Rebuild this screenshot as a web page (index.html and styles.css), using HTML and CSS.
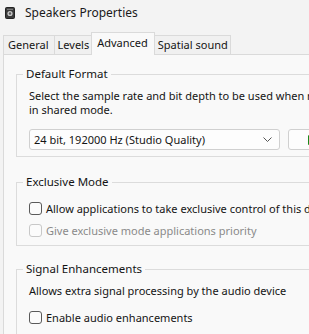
FILE: index.html
```html
<!DOCTYPE html>
<html>
<head>
    <title>Speakers Properties</title>
    <link rel="stylesheet" href="styles.css">
</head>
<body>
    <div class="titlebar">
        <svg class="app-icon" width="10" height="12" viewBox="0 0 10 12">
            <rect x="0.5" y="0.5" width="9" height="11" rx="1" fill="#3a3a3a" stroke="#222"/>
            <circle cx="5" cy="6.5" r="2.6" fill="#c9c9c9"/>
            <circle cx="5" cy="6.5" r="1.2" fill="#5a5a5a"/>
            <rect x="2" y="1.8" width="6" height="1" fill="#8a8a8a"/>
        </svg>
        <span class="title">Speakers Properties</span>
    </div>

    <div class="tabs">
        <div class="tab wide">General</div>
        <div class="tab">Levels</div>
        <div class="tab active">Advanced</div>
        <div class="tab">Spatial sound</div>
    </div>

    <div class="panel">
        <fieldset class="group format">
            <legend>Default Format</legend>
            <p class="desc">Select the sample rate and bit depth to be used when running<br>in shared mode.</p>
            <div class="format-row">
                <div class="select">
                    <span>24 bit, 192000 Hz (Studio Quality)</span>
                    <svg width="9" height="5" viewBox="0 0 9 5"><path d="M0.5 0.5 L4.5 4.5 L8.5 0.5" fill="none" stroke="#555" stroke-width="1"/></svg>
                </div>
                <div class="btn"><span class="play"></span>Test</div>
            </div>
        </fieldset>

        <fieldset class="group exclusive">
            <legend>Exclusive Mode</legend>
            <label class="check"><span class="box"></span>Allow applications to take exclusive control of this device</label>
            <label class="check disabled"><span class="box"></span>Give exclusive mode applications priority</label>
        </fieldset>

        <fieldset class="group">
            <legend>Signal Enhancements</legend>
            <p class="desc">Allows extra signal processing by the audio device</p>
            <label class="check spaced"><span class="box"></span>Enable audio enhancements</label>
        </fieldset>
    </div>
</body>
</html>
```

FILE: styles.css
```css
html, body { margin: 0; }
body {
    width: 309px;
    height: 334px;
    overflow: hidden;
    background: #f3f3f3;
    font-family: "Noto Sans", "Open Sans", sans-serif;
    font-size: 11px;
    color: #141414;
}
.titlebar {
    height: 25px;
    display: flex;
    align-items: center;
    padding-left: 5px;
    gap: 10px;
}
.title { font-size: 12px; color: #1a1a1a; }

.tabs {
    display: flex;
    align-items: flex-end;
    height: 29px;
    padding-left: 3px;
    position: relative;
    z-index: 1;
}
.tab {
    height: 18px;
    line-height: 18px;
    padding: 0 2px 0 3px;
    background: #f0f0f0;
    border: 1px solid #dadada;
    border-bottom: none;
    margin-right: -1px;
    white-space: nowrap;
}
.tab.wide { padding: 0 5px 0 4px; }
.tab.active {
    height: 22px;
    line-height: 20px;
    background: #f9f9f9;
    margin-bottom: -1px;
    padding: 0 6px 0 5px;
}

.panel {
    margin-left: 3px;
    width: 340px;
    background: #f9f9f9;
    border: 1px solid #dadada;
    border-right: none;
    padding: 11px 0 20px 12px;
    height: 260px;
}
.group {
    border: 1px solid #dcdcdc;
    margin: 0 0 15px 0;
    padding: 7px 12px 6px 12px;
}
.group.format { margin-bottom: 17px; }
.group.exclusive { padding-bottom: 4px; }
.group legend {
    padding: 0 3px;
    margin-left: -6px;
    line-height: 16px;
    font-size: 11.5px;
}
.desc {
    margin: 0;
    line-height: 14px;
    white-space: nowrap;
}
.format-row {
    display: flex;
    gap: 8px;
    margin-top: 12px;
}
.select {
    width: 251px;
    height: 21px;
    box-sizing: border-box;
    border: 1px solid #d0d0d0;
    border-radius: 3px;
    background: #fdfdfd;
    display: flex;
    align-items: center;
    justify-content: space-between;
    padding: 0 7px 0 4px;
}
.btn {
    width: 80px;
    height: 21px;
    box-sizing: border-box;
    border: 1px solid #d0d0d0;
    border-radius: 3px;
    background: #fdfdfd;
    display: flex;
    align-items: center;
    padding-left: 19px;
    gap: 4px;
}
.play {
    width: 0;
    height: 0;
    border-left: 8px solid #1a8a1a;
    border-top: 5px solid transparent;
    border-bottom: 5px solid transparent;
}
.check {
    display: flex;
    align-items: center;
    gap: 4px;
    height: 22px;
    white-space: nowrap;
}
.check.spaced { margin-top: 8px; }
.box {
    width: 13px;
    height: 13px;
    box-sizing: border-box;
    border: 1px solid #5a5a5a;
    border-radius: 3px;
    background: #fbfbfb;
}
.check.disabled { color: #8a8a8a; }
.check.disabled .box { border-color: #c8c8c8; }
```
